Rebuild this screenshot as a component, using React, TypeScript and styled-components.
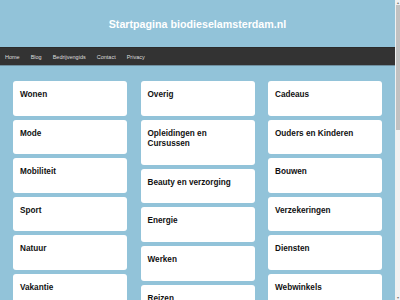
import styled, { createGlobalStyle } from 'styled-components'

const GlobalStyle = createGlobalStyle`
  html, body {
    margin: 0;
    padding: 0;
    background: #92c3d9;
  }
  body {
    font-family: 'Liberation Sans', Arial, sans-serif;
  }
`

const columns: string[][] = [
  ['Wonen', 'Mode', 'Mobiliteit', 'Sport', 'Natuur', 'Vakantie', 'Gezondheid', 'Hobby', 'Financieel', 'Tuin', 'Dieren', 'Eten en drinken', 'Computers', 'Media', 'Vrije tijd'],
  ['Overig', 'Opleidingen en Cursussen', 'Beauty en verzorging', 'Energie', 'Werken', 'Reizen', 'Zakelijk', 'Auto', 'Recht', 'Kunst', 'Muziek', 'Feesten', 'Klussen', 'Techniek'],
  ['Cadeaus', 'Ouders en Kinderen', 'Bouwen', 'Verzekeringen', 'Diensten', 'Webwinkels', 'Internet', 'Huis', 'Elektronica', 'Kleding', 'Sieraden', 'Fietsen', 'Wellness', 'Interieur', 'Uitgaan'],
]

const navLinks = ['Home', 'Blog', 'Bedrijvengids', 'Contact', 'Privacy']

export default function App(): JSX.Element {
  return (
    <>
      <GlobalStyle />
      <Page>
        <Header>
          <Title>Startpagina biodieselamsterdam.nl</Title>
        </Header>
        <Nav>
          {navLinks.map((l) => (
            <NavLink key={l} href="#">
              {l}
            </NavLink>
          ))}
        </Nav>
        <Main>
          {columns.map((col, i) => (
            <Column key={i}>
              {col.map((c) => (
                <Card key={c}>
                  <h2>{c}</h2>
                </Card>
              ))}
            </Column>
          ))}
        </Main>
      </Page>
      {/* the window's scrollbar, as it shows in the picture */}
      <ScrollTrack>
        <Arrow>▴</Arrow>
        <Thumb />
        <Arrow className="down">▾</Arrow>
      </ScrollTrack>
    </>
  )
}

const Page = styled.div`
  margin-right: 5px;
`

const Header = styled.header`
  height: 47px;
  display: flex;
  align-items: center;
  justify-content: center;
`

const Title = styled.h1`
  margin: 0;
  color: #fff;
  font-size: 10.7px;
  font-weight: bold;
`

const Nav = styled.nav`
  height: 17px;
  background-color: #333;
  border-top: 1px solid #2b2b2b;
  border-bottom: 1px solid #6f8f9f;
  display: flex;
  align-items: center;
  padding: 0 5px;
  gap: 11px;
`

const NavLink = styled.a`
  color: #ddd;
  font-size: 5.5px;
  text-decoration: none;
`

const Main = styled.main`
  display: grid;
  grid-template-columns: repeat(3, 1fr);
  column-gap: 13.5px;
  padding: 15px 13px 20px;
  align-items: start;
`

const Column = styled.div`
  display: flex;
  flex-direction: column;
  gap: 4px;
`

const Card = styled.div`
  background-color: #fff;
  border-radius: 3px;
  padding: 9px 7px 15px;
  h2 {
    margin: 0;
    font-size: 8.2px;
    line-height: 10.6px;
    font-weight: bold;
    color: #111;
  }
`

const ScrollTrack = styled.div`
  position: fixed;
  top: 0;
  right: 0;
  width: 5px;
  height: 100vh;
  background: #f1f1f1;
  display: flex;
  flex-direction: column;
  align-items: center;
`

const Arrow = styled.div`
  height: 5px;
  font-size: 4px;
  line-height: 5px;
  color: #777;
  &.down {
    margin-top: auto;
  }
`

const Thumb = styled.div`
  width: 4px;
  height: 125px;
  background: #c1c1c1;
`
